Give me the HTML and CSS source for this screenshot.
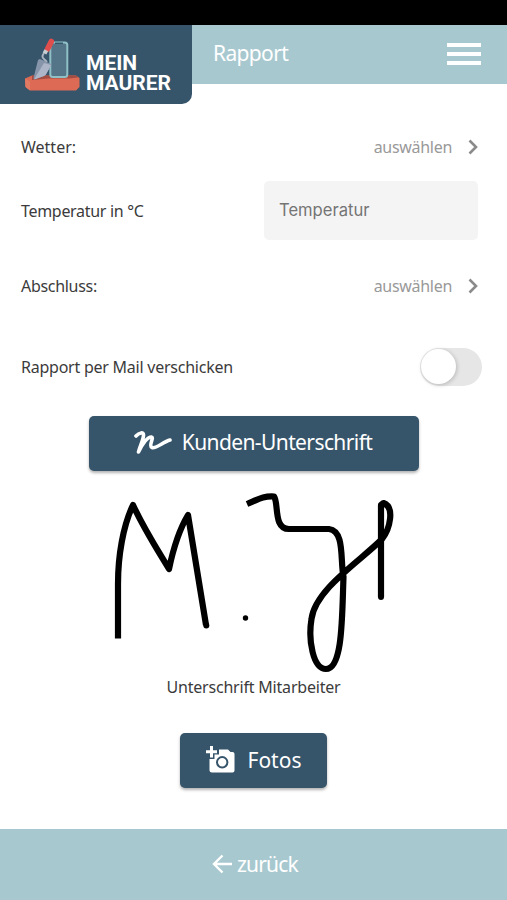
FILE: index.html
```html
<!DOCTYPE html>
<html lang="de">
<head>
  <meta charset="UTF-8">
  <meta name="viewport" content="width=device-width, initial-scale=1">
  <title>Mein Maurer - Rapport</title>
  <link rel="stylesheet" href="styles.css">
</head>
<body>

  <div class="statusbar"></div>

  <header class="header">
    <div class="logo">
      <svg class="logo-icon" width="56" height="56" viewBox="0 0 56 56">
        <path d="M1 41.500 L8 38.500 H52 L55.500 41 V50 L52 53.500 H6 L1.500 50Z" fill="#dc6a54"/>
        <path d="M1 41.500 L6 44.500 V53.500 L1.500 50Z" fill="#e07a63"/>
        <path d="M8 38.500 H52 L54 40.500 L45 41.500 H24 L8 43Z" fill="#a24c42"/>
        <rect x="26.300" y="5.500" width="17" height="34.500" rx="2.500" fill="#547588" stroke="#8fc0c6" stroke-width="2"/>
        <path d="M31 5.500 h8 v1.500 h-8z" fill="#34566b"/>
        <path d="M20 16 Q17 20 20 22 L23 25" fill="none" stroke="#aab4c0" stroke-width="2"/>
        <path d="M16 22 Q14 22 13.500 25 L9.500 41 Q9.500 43 12 42 L20 39 Q22 38 23 35.500 L27 28.500 Q28 27 26 26.500Z" fill="#8795aa"/>
        <path d="M20 26 L10 42.500 L20 39 Q22 38 23 35.500 L27.200 28Z" fill="#adb6c8"/>
        <path d="M27.300 4.500 L23.500 12" stroke="#df4e4c" stroke-width="5.600" stroke-linecap="round"/>
        <path d="M22.300 13.300 L20.500 16.500" stroke="#c6ced4" stroke-width="4.200"/>
      </svg>
      <div class="logo-text">MEIN<br>MAURER</div>
    </div>
    <h1 class="title">Rapport</h1>
    <div class="menu">
      <span></span>
      <span></span>
      <span></span>
    </div>
  </header>

  <main class="content">
    <div class="row">
      <span class="label label-wetter">Wetter:</span>
      <span class="select"><span class="select-text">auswählen</span>
        <svg width="10" height="16" viewBox="0 0 10 16"><path d="M1.500 1.500 L8 8 L1.500 14.500" fill="none" stroke="#8b8b8b" stroke-width="2.600"/></svg>
      </span>
    </div>

    <div class="row row-input">
      <label class="label" for="temperatur">Temperatur in °C</label>
      <input class="input" type="text" id="temperatur" placeholder="Temperatur">
    </div>

    <div class="row">
      <span class="label">Abschluss:</span>
      <span class="select"><span class="select-text">auswählen</span>
        <svg width="10" height="16" viewBox="0 0 10 16"><path d="M1.500 1.500 L8 8 L1.500 14.500" fill="none" stroke="#8b8b8b" stroke-width="2.600"/></svg>
      </span>
    </div>

    <div class="row row-toggle">
      <span class="label label-mail">Rapport per Mail verschicken</span>
      <span class="toggle"></span>
    </div>

    <button class="button button-sign">
      <svg width="38" height="24" viewBox="0 0 38 24"><path d="M2 5 C5 1.500 10 0.500 9.500 4.500 C9 10 6 15 4.500 21 C8 14 13 5.500 17.500 6 C20.500 6.500 14 15 18 16.500 C22 18 29 11 36 9" fill="none" stroke="#fff" stroke-width="3.600" stroke-linecap="round" stroke-linejoin="round"/></svg>
      <span>Kunden-Unterschrift</span>
    </button>

    <svg class="signature" width="300" height="190" viewBox="104 484 300 190">
      <g fill="none" stroke="#000" stroke-width="6.200" stroke-linejoin="round">
        <path d="M118 638.500 V584 C118 556 123 526 133 505 C144 529 157 549 169 569 C173 550 179 530 188 515 C194 550 200 590 206 625"/>
        <path d="M247 504 C259 499 263 496 274 496.500 C279 503 273 529 289 529 H329 C345 531 340 560 343.500 577 C342 615 343 669 326 669 C313 669 308 640 311.500 619 C315 589 363 559 382 539 C390 529 395 507 383.500 503 L381 505 V597"/>
      </g>
      <circle cx="206.300" cy="625.500" r="3"/>
      <circle cx="381" cy="597" r="3"/>
      <circle cx="245.500" cy="618" r="2.700"/>
    </svg>
    <div class="caption">Unterschrift Mitarbeiter</div>

    <button class="button button-fotos">
      <svg width="29" height="27" viewBox="0 0 29 27">
        <path d="M0 4.200 H4 V0 H7 V4.200 H11 V7.200 H7 V11.400 H4 V7.200 H0Z" fill="#fff"/>
        <path d="M13 3.500 H22 L24.500 6 H26.500 Q28.500 6 28.500 8 V24.500 Q28.500 26.500 26.500 26.500 H6 Q3.500 26.500 3.500 24.500 V13 H8.500 V8.500 H13Z" fill="#fff"/>
        <circle cx="16.200" cy="16.300" r="5.200" fill="none" stroke="#36546a" stroke-width="2"/>
      </svg>
      <span>Fotos</span>
    </button>
  </main>

  <footer class="footer">
    <svg width="21" height="20" viewBox="0 0 21 20"><path d="M20 10 H2.500 M10.500 1.500 L2 10 L10.500 18.500" fill="none" stroke="#fff" stroke-width="2.400"/></svg>
    <span>zurück</span>
  </footer>

</body>
</html>
```

FILE: styles.css
```css
* {
  box-sizing: border-box;
}

body {
  margin: 0;
  height: 900px;
  display: flex;
  flex-direction: column;
  overflow: hidden;
  background: #fff;
  color: #3b3b3b;
  font-family: 'Noto Sans', sans-serif;
  font-size: 16px;
}

.statusbar {
  height: 25px;
  flex: none;
  background: #000;
}

.header {
  display: flex;
  align-items: flex-start;
  flex: none;
  height: 59px;
  background: #a8c8cf;
}

.logo {
  display: flex;
  flex: none;
  width: 192px;
  height: 79px;
  padding: 12px 0 0 24px;
  background: #36546a;
  border-bottom-right-radius: 10px;
}

.logo-text {
  margin: 16px 0 0 6px;
  color: #fff;
  font-family: Roboto, sans-serif;
  font-size: 21px;
  font-weight: 700;
  line-height: 20px;
}

.title {
  flex: 1;
  margin: 0 0 0 21px;
  color: #fff;
  font-size: 21px;
  font-weight: 400;
  line-height: 57px;
  letter-spacing: -0.65px;
}

.menu {
  display: flex;
  flex-direction: column;
  gap: 5px;
  width: 34px;
  margin: 18px 26px 0 0;
}

.menu span {
  height: 4px;
  background: #fff;
}

.content {
  display: flex;
  flex-direction: column;
  align-items: center;
  flex: 1;
  padding-top: 33px;
}

.row {
  display: flex;
  align-items: center;
  justify-content: space-between;
  width: 100%;
  height: 60px;
  padding: 0 29px 0 21px;
}

.row-input {
  margin: 3px 0 16px;
}

.row-input .label {
  padding-top: 2px;
}

.row-toggle {
  height: 40px;
  margin-top: 31px;
  padding-right: 25px;
}

.label {
  letter-spacing: -0.3px;
}

.label-wetter {
  letter-spacing: 0;
}

.label-mail {
  letter-spacing: -0.24px;
}

.select {
  display: flex;
  align-items: center;
  gap: 16px;
  color: #999;
}

.select-text {
  letter-spacing: -0.3px;
}

.input {
  width: 214px;
  height: 59px;
  padding: 0 15px;
  border: 0;
  border-radius: 5px;
  background: #f4f4f4;
  font-family: Inter, sans-serif;
  font-size: 16.6px;
}

.input::placeholder {
  color: #757575;
}

.toggle {
  display: flex;
  width: 62px;
  height: 38px;
  padding: 1px;
  border-radius: 19px;
  background: #e6e6e6;
}

.toggle::before {
  content: "";
  width: 35px;
  height: 35px;
  border-radius: 50%;
  background: #fff;
  box-shadow: 1px 1px 4px rgba(0,0,0,0.2);
}

.button {
  display: flex;
  align-items: center;
  justify-content: center;
  flex: none;
  height: 55px;
  padding: 0 0 2px;
  border: 0;
  border-radius: 5px;
  background: #36546a;
  box-shadow: 0 2px 3px rgba(0,0,0,0.3);
  color: #fff;
  font-family: 'Noto Sans', sans-serif;
  font-size: 21px;
}

.button-sign {
  gap: 10px;
  width: 330px;
  margin-top: 29px;
  padding: 0 1px 4px 0;
  letter-spacing: -0.6px;
}

.button-sign svg {
  margin-top: 3px;
}

.button-fotos {
  gap: 13px;
  width: 147px;
  margin-top: 34px;
}

.signature {
  flex: none;
  margin-top: 13px;
}

.caption {
  line-height: 24px;
  margin-top: 1px;
  letter-spacing: -0.2px;
}

.footer {
  display: flex;
  align-items: center;
  justify-content: center;
  gap: 4px;
  flex: none;
  height: 71px;
  padding: 0 0 2px 3px;
  background: #a8c8cf;
  color: #fff;
  font-size: 21px;
  letter-spacing: -0.8px;
}
```
